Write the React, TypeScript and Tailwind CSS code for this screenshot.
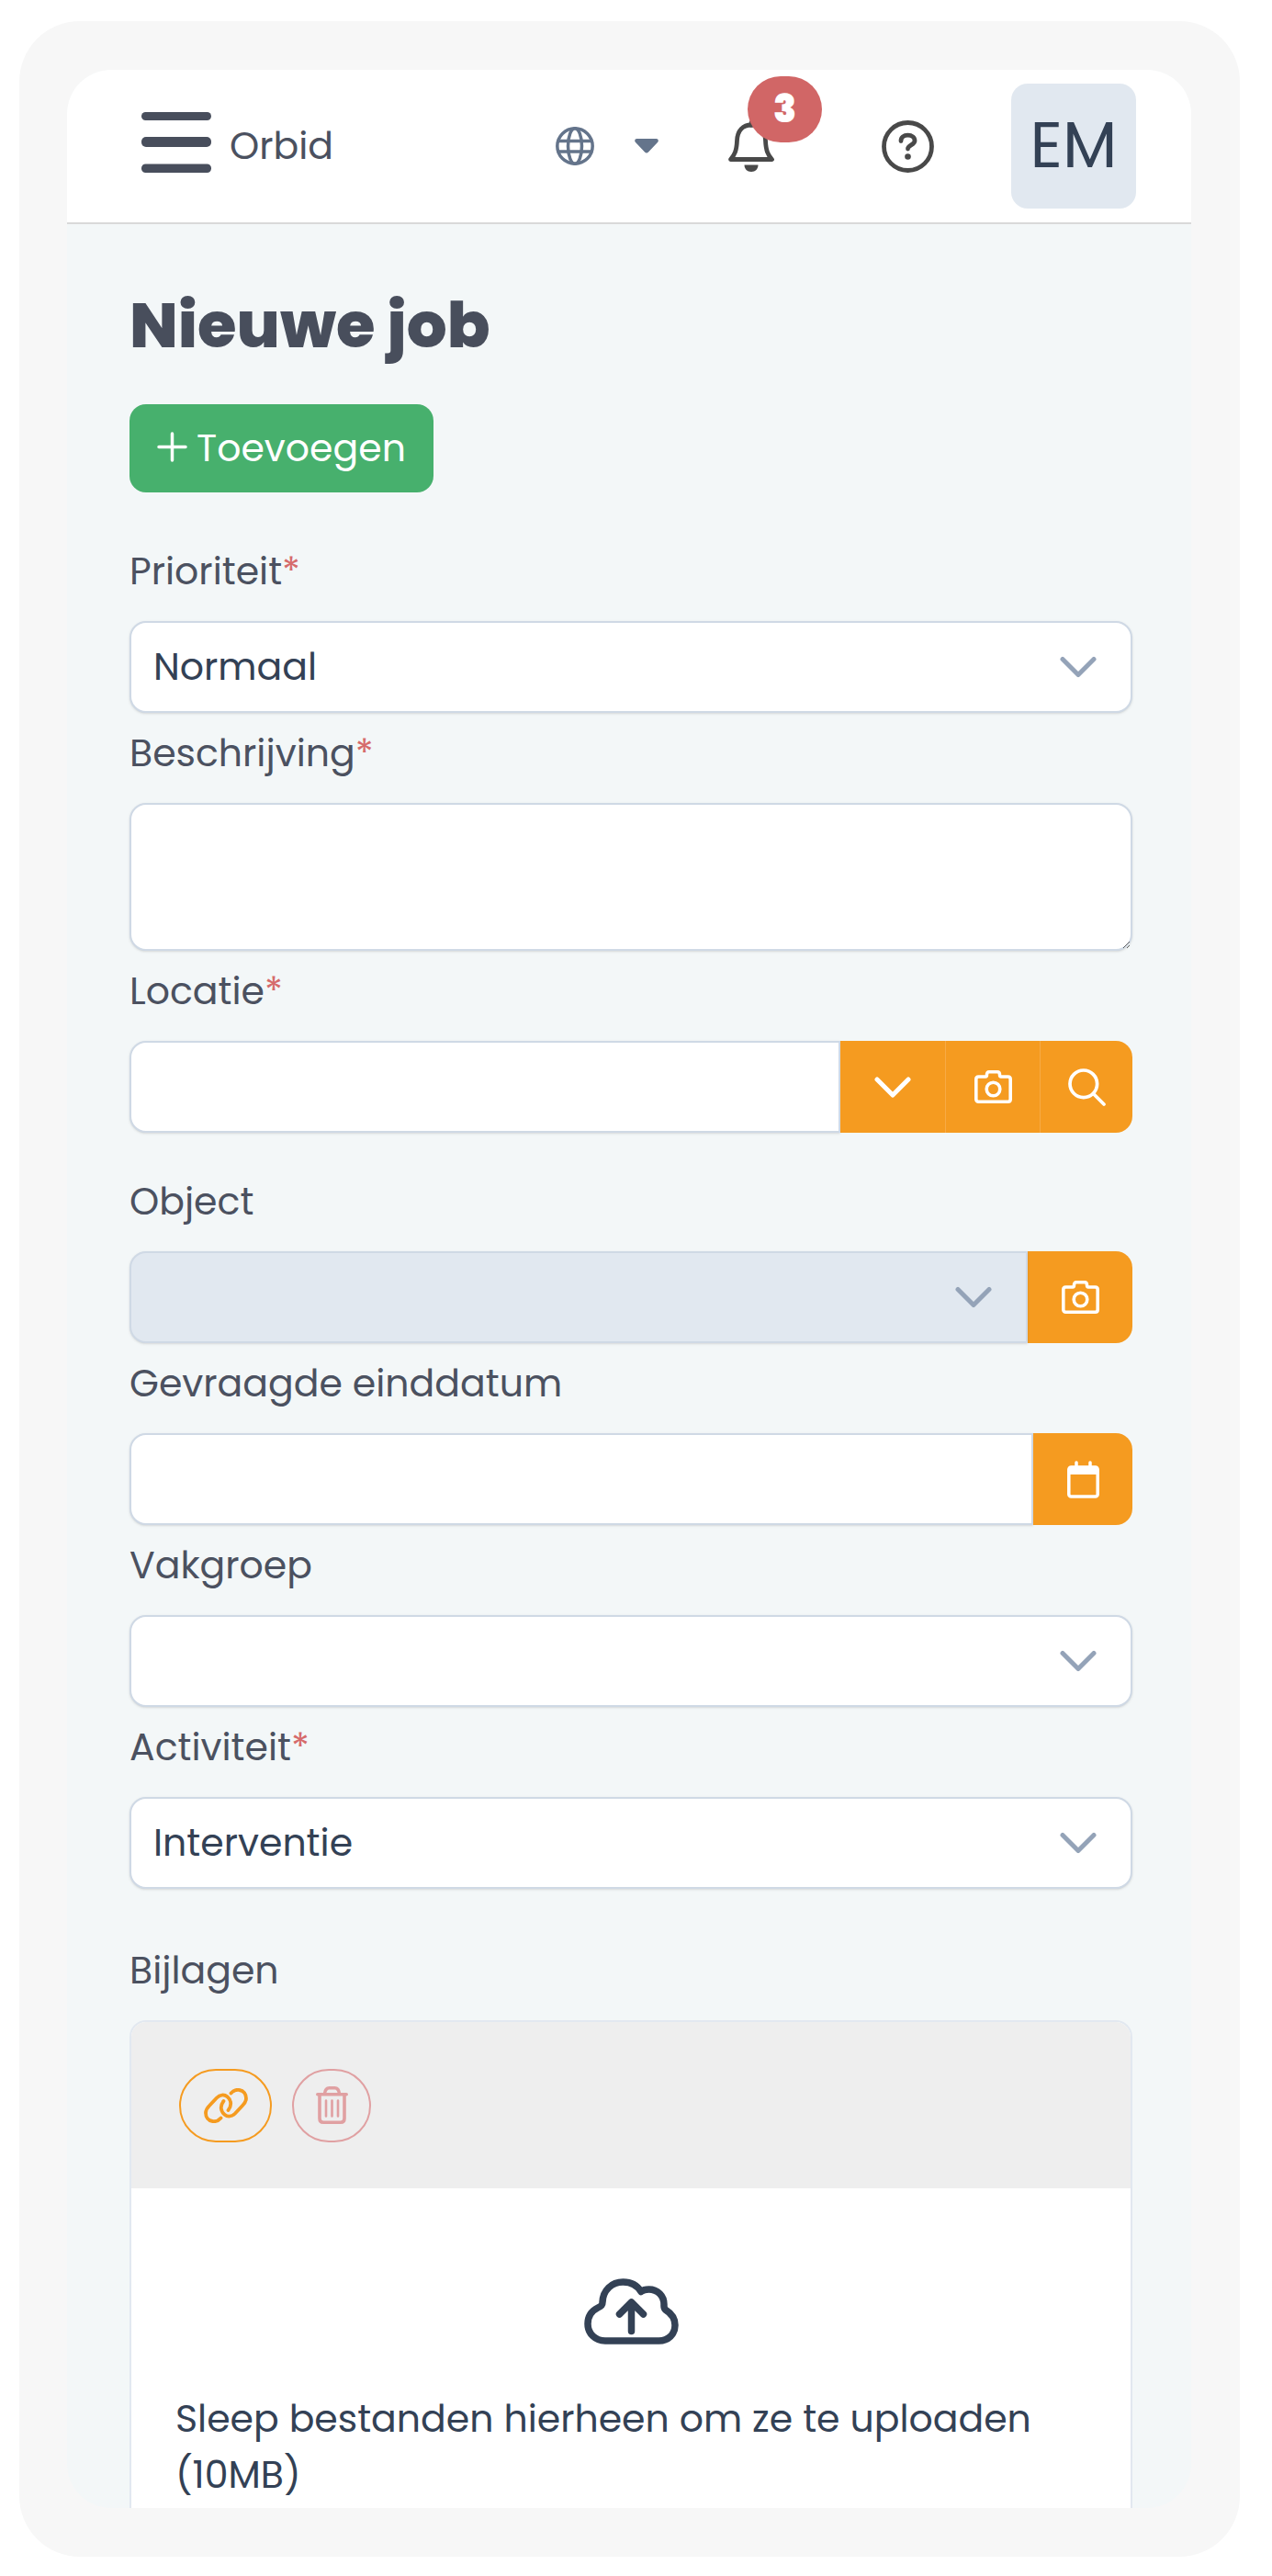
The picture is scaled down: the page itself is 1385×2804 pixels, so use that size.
import React from 'react';

interface IconProps {
  className?: string;
}

interface FieldProps {
  id: string;
  label: string;
  required?: boolean;
  className?: string;
  children: React.ReactNode;
}

interface SelectProps {
  id: string;
  options: string[];
  disabled?: boolean;
  grouped?: boolean;
}

const strokeProps = {
  fill: 'none',
  stroke: 'currentColor',
  strokeLinecap: 'round',
  strokeLinejoin: 'round',
} as const;

const MenuIcon: React.FC<IconProps> = ({ className }) => (
  <svg viewBox="0 0 76 66" className={className} fill="currentColor" aria-hidden="true">
    <rect x="0" y="0" width="76" height="9" rx="4.5" />
    <rect x="0" y="27" width="76" height="11" rx="5" />
    <rect x="0" y="56.5" width="76" height="9.5" rx="4.5" />
  </svg>
);

const GlobeIcon: React.FC<IconProps> = ({ className }) => (
  <svg viewBox="0 0 42 42" className={className} {...strokeProps} strokeWidth="3.5" aria-hidden="true">
    <circle cx="21" cy="21" r="19.2" />
    <ellipse cx="21" cy="21" rx="7.5" ry="19.2" />
    <path d="M3 15.5h36M3 27h36" />
  </svg>
);

const CaretIcon: React.FC<IconProps> = ({ className }) => (
  <svg viewBox="0 0 26 16" className={className} fill="currentColor" aria-hidden="true">
    <path d="M2.5 0h21c2 0 3 2 1.7 3.8L15 14.500c-1.200 1.300-2.800 1.300-4 0L.8 3.800C-.5 2 .5 0 2.500 0z" />
  </svg>
);

const BellIcon: React.FC<IconProps> = ({ className }) => (
  <svg viewBox="0 0 50 56" className={className} {...strokeProps} strokeWidth="4.8" aria-hidden="true">
    <path d="M25 2.500v3M2.500 42.500C7 37.500 9 33 9.500 22 10 11 16 5 25 5s15 6 15.500 17c.5 11 2.500 15.500 7 20.500z" />
    <path d="M17.500 48.500h15c0 4.500-3 7.500-7.500 7.500s-7.500-3-7.500-7.500z" fill="currentColor" stroke="none" />
  </svg>
);

const HelpIcon: React.FC<IconProps> = ({ className }) => (
  <svg viewBox="0 0 57 57" className={className} {...strokeProps} strokeWidth="4.8" aria-hidden="true">
    <circle cx="28.5" cy="28.5" r="26" />
    <path d="M21 22.500c0-4 3-6.300 7.500-6.300s7.500 2.300 7.500 6.100c0 4.500-7.500 4.700-7.500 8.700" />
    <circle cx="28.5" cy="39.500" r="3.300" fill="currentColor" stroke="none" />
  </svg>
);

const ChevronIcon: React.FC<IconProps> = ({ className }) => (
  <svg viewBox="0 0 40 23" className={className} {...strokeProps} strokeWidth="5" aria-hidden="true">
    <path d="M3 3l17 17L37 3" />
  </svg>
);

const CameraIcon: React.FC<IconProps> = ({ className }) => (
  <svg viewBox="0 0 41 36" className={className} {...strokeProps} strokeWidth="3.6" aria-hidden="true">
    <path d="M4.500 7H12c1.200 0 1.500-.8 1.500-2.200 0-2 .8-3 2.500-3h9c1.700 0 2.500 1 2.500 3 0 1.400.3 2.200 1.500 2.200h7.500c1.700 0 2.700 1 2.700 2.700v21.800c0 1.700-1 2.700-2.700 2.700h-32c-1.700 0-2.700-1-2.700-2.700V9.700C1.800 8 2.800 7 4.500 7z" />
    <circle cx="20.500" cy="20.500" r="7.300" />
  </svg>
);

const SearchIcon: React.FC<IconProps> = ({ className }) => (
  <svg viewBox="0 0 41 41" className={className} {...strokeProps} strokeWidth="3.700" aria-hidden="true">
    <circle cx="16.800" cy="16.800" r="14.800" />
    <path d="M27.500 27.500L39 39" />
  </svg>
);

const CalendarIcon: React.FC<IconProps> = ({ className }) => (
  <svg viewBox="0 0 35 41" className={className} {...strokeProps} strokeWidth="3.5" aria-hidden="true">
    <path d="M10 2v5M25 2v5" />
    <rect x="1.800" y="7" width="31.400" height="32" rx="2.500" />
    <path d="M1 7.500h33V15H1z" fill="currentColor" stroke="none" />
  </svg>
);

const PlusIcon: React.FC<IconProps> = ({ className }) => (
  <svg viewBox="0 0 33 33" className={className} {...strokeProps} strokeWidth="3.5" aria-hidden="true">
    <path d="M16.500 2v29M2 16.500h29" />
  </svg>
);

const LinkIcon: React.FC<IconProps> = ({ className }) => (
  <svg viewBox="0 0 48 38" className={className} {...strokeProps} strokeWidth="3.800" aria-hidden="true">
    <path d="M18.500 32.500c-2.500 2.800-5.500 4.200-9 3.500C4.500 35.300 2 31 2 27c0-3.500 1.500-5.500 4-8l8-8.500c3.500-3.500 8-4 11.500-1.200 4.500 3.700 5 9.700 1 14.700" />
    <path d="M29.500 5.500c2.500-2.800 5.500-4.200 9-3.500C43.500 2.700 46 7 46 11c0 3.500-1.500 5.500-4 8l-8 8.500c-3.500 3.500-8 4-11.500 1.200-4.500-3.700-5-9.700-1-14.700" />
  </svg>
);

const TrashIcon: React.FC<IconProps> = ({ className }) => (
  <svg viewBox="0 0 35 41" className={className} {...strokeProps} strokeWidth="3.6" aria-hidden="true">
    <path d="M1.800 8.700h31.400M9.500 8c.5-4 2.500-6.200 5-6.200h6c2.500 0 4.500 2.200 5 6.200" />
    <path d="M4 9v26c0 2.700 1.500 4.200 4 4.200h19c2.500 0 4-1.500 4-4.200V9" />
    <path d="M11 15.500v17M17.500 15.500v17M24 15.500v17" strokeWidth="2.600" />
  </svg>
);

const CloudUploadIcon: React.FC<IconProps> = ({ className }) => (
  <svg viewBox="0 0 103 72" className={className} {...strokeProps} strokeWidth="7.500" aria-hidden="true">
    <path d="M23 68C12 68 4 60 4 49.500c0-8 4-14 11-17.500 4-2 5-3 5-6C20.500 13 30 4 42.500 4 51 4 58 8 62 14.500c2-1.700 5-2.500 8.500-2.500C80 12 87 19 87 28.500c0 3-.5 4 2 6 6.500 4 10 9.500 10 16.500 0 10-7.500 17-17.500 17z" />
    <path d="M51.500 57.500V27M38.500 39l13-13 13 13" />
  </svg>
);

const Field: React.FC<FieldProps> = ({ id, label, required, className = 'pt-3.5', children }) => (
  <div className={className}>
    <label htmlFor={id} className="block mb-6 text-[41px] leading-[60px] text-[#4b5160]">
      {label}
      {required && <span className="text-[#d66b6b]">*</span>}
    </label>
    <div className="flex">{children}</div>
  </div>
);

const Select: React.FC<SelectProps> = ({ id, options, disabled, grouped }) => (
  <div className="relative flex-1 min-w-0">
    <select
      id={id}
      disabled={disabled}
      className={`block w-full h-[100px] pl-6 pr-24 appearance-none border-2 border-[#cfd9e5] text-[41px] text-[#334155] opacity-100 shadow ${
        grouped ? 'rounded-l-[18px]' : 'rounded-[18px]'
      } ${disabled ? 'bg-[#e1e8f0]' : 'bg-white'}`}
    >
      {options.map((option) => (
        <option key={option}>{option}</option>
      ))}
    </select>
    <ChevronIcon className="absolute right-[39px] top-1/2 -translate-y-1/2 w-10 pointer-events-none text-[#94a3b8]" />
  </div>
);

const inputClass = 'flex-1 min-w-0 h-[100px] px-6 bg-white border-2 border-[#cfd9e5] rounded-l-[18px] text-[41px] text-[#334155] shadow';
const addonClass = 'flex items-center justify-center h-[100px] bg-[#f59b20] text-white';

export default function App() {
  return (
    <div className="min-h-screen bg-white pt-[23px] pb-[22px] pl-[21px] pr-[35px] font-['Poppins','Inter',sans-serif]">
      <div className="bg-[#f7f7f7] rounded-[66px] pl-[52px] pr-[53px] py-[53px]">
        <div className="overflow-hidden rounded-[48px] bg-[#f3f7f8]">
          <header className="flex items-center justify-between h-[168px] pl-[81px] pr-[60px] bg-white border-b-2 border-[#d9d9d9]">
            <div className="flex items-center gap-5">
              <button type="button" aria-label="Menu" className="pb-2 text-[#484e5c]">
                <MenuIcon className="w-[76px]" />
              </button>
              <span className="text-[41px] leading-[60px] text-[#4b5160]">Orbid</span>
            </div>
            <div className="flex items-center">
              <button type="button" aria-label="Taal" className="flex items-center gap-11 mr-[76px] text-[#64748b]">
                <GlobeIcon className="w-[42px]" />
                <CaretIcon className="w-[26px]" />
              </button>
              <button type="button" aria-label="Meldingen" className="relative mr-[117px] text-[#494949]">
                <BellIcon className="w-[50px]" />
                <span className="absolute -top-12 left-[21px] flex items-center justify-center w-[81px] h-[72px] rounded-full bg-[#d16666] text-[41px] font-black text-white">
                  3
                </span>
              </button>
              <button type="button" aria-label="Help" className="mr-[84px] text-[#494949]">
                <HelpIcon className="w-[57px]" />
              </button>
              <button
                type="button"
                className="flex items-center justify-center size-[136px] rounded-[18px] bg-[#e1e8f0] text-[69px] text-[#334155]"
              >
                EM
              </button>
            </div>
          </header>

          <main className="pt-[60px] pl-[68px] pr-16">
            <h1 className="text-[69px] leading-[100px] font-extrabold text-[#484e5c]">Nieuwe job</h1>
            <button
              type="button"
              className="flex items-center gap-2.5 h-24 mt-9 px-[30px] rounded-[18px] bg-[#47b06d] text-[41px] text-white"
            >
              <PlusIcon className="w-[33px] mb-1" />
              Toevoegen
            </button>

            <form>
              <Field id="priority" label="Prioriteit" required className="pt-14">
                <Select id="priority" options={['Normaal', 'Dringend']} />
              </Field>
              <Field id="description" label="Beschrijving" required>
                <textarea
                  id="description"
                  className="block w-full h-[161px] px-6 py-4 bg-white border-2 border-[#cfd9e5] rounded-[18px] text-[41px] text-[#334155] shadow"
                />
              </Field>
              <Field id="location" label="Locatie" required>
                <input id="location" type="text" className={inputClass} />
                <button type="button" aria-label="Kies locatie" className={`${addonClass} w-[114px]`}>
                  <ChevronIcon className="w-10" />
                </button>
                <button type="button" aria-label="Scan locatie" className={`${addonClass} w-[103px] border-l border-[#f7aa45]`}>
                  <CameraIcon className="w-[41px]" />
                </button>
                <button type="button" aria-label="Zoek locatie" className={`${addonClass} w-[101px] border-l border-[#f7aa45] rounded-r-[18px]`}>
                  <SearchIcon className="w-[41px]" />
                </button>
              </Field>
              <Field id="object" label="Object" className="pt-[45px]">
                <Select id="object" options={['']} disabled grouped />
                <button type="button" aria-label="Scan object" className={`${addonClass} w-[114px] rounded-r-[18px]`}>
                  <CameraIcon className="w-[41px]" />
                </button>
              </Field>
              <Field id="due-date" label="Gevraagde einddatum">
                <input id="due-date" type="text" className={inputClass} />
                <button type="button" aria-label="Kies datum" className={`${addonClass} w-[108px] rounded-r-[18px]`}>
                  <CalendarIcon className="w-[35px]" />
                </button>
              </Field>
              <Field id="trade" label="Vakgroep">
                <Select id="trade" options={['']} />
              </Field>
              <Field id="activity" label="Activiteit" required>
                <Select id="activity" options={['Interventie', 'Onderhoud']} />
              </Field>

              <section className="pt-[59px]">
                <h2 className="mb-6 text-[41px] leading-[60px] text-[#4b5160]">Bijlagen</h2>
                <div className="overflow-hidden bg-white border-2 border-b-0 border-[#e2e8f0] rounded-t-[18px]">
                  <div className="flex items-center gap-[22px] h-[181px] px-[52px] bg-[#eeeeee]">
                    <button
                      type="button"
                      aria-label="Link toevoegen"
                      className="flex items-center justify-center w-[101px] h-20 border-2 border-[#f59b20] rounded-full text-[#f59b20]"
                    >
                      <LinkIcon className="w-12" />
                    </button>
                    <button
                      type="button"
                      aria-label="Verwijderen"
                      className="flex items-center justify-center w-[86px] h-20 border-2 border-[#e0a0a2] rounded-full text-[#e0a0a2]"
                    >
                      <TrashIcon className="w-[35px]" />
                    </button>
                  </div>
                  <div className="px-12 pt-[98px] pb-1.5">
                    <CloudUploadIcon className="w-[103px] mx-auto text-[#334155]" />
                    <p className="mt-[50px] text-[41px] leading-[61px] text-[#334155]">
                      Sleep bestanden hierheen om ze te uploaden (10MB)
                    </p>
                  </div>
                </div>
              </section>
            </form>
          </main>
        </div>
      </div>
    </div>
  );
}
